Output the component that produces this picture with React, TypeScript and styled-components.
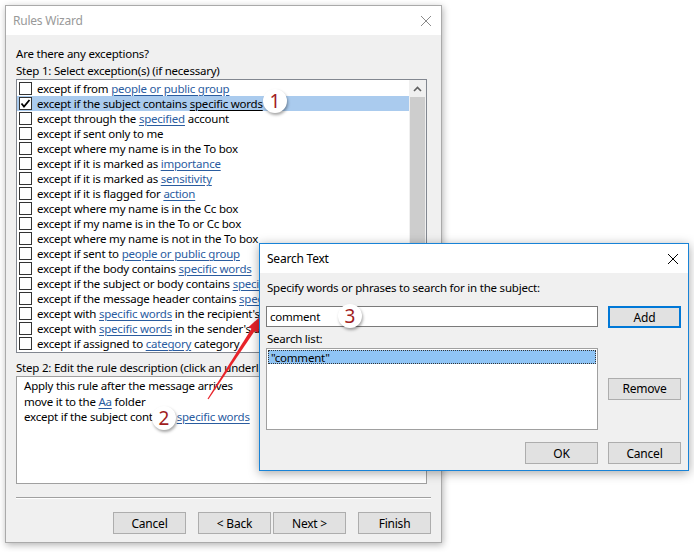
import styled, { createGlobalStyle } from 'styled-components'

const FONT = `"Noto Sans", "DejaVu Sans", sans-serif`

const GlobalStyle = createGlobalStyle`
  html, body {
    margin: 0;
    padding: 0;
    background: #fff;
  }
  body {
    font-family: ${FONT};
    font-size: 11.5px;
    letter-spacing: -0.22px;
    color: #000;
  }
`

type Part = { text: string; link?: boolean }

const exceptions: { parts: Part[]; checked?: boolean }[] = [
  { parts: [{ text: 'except if from ' }, { text: 'people or public group', link: true }] },
  { parts: [{ text: 'except if the subject contains ' }, { text: 'specific words', link: true }], checked: true },
  { parts: [{ text: 'except through the ' }, { text: 'specified', link: true }, { text: ' account' }] },
  { parts: [{ text: 'except if sent only to me' }] },
  { parts: [{ text: 'except where my name is in the To box' }] },
  { parts: [{ text: 'except if it is marked as ' }, { text: 'importance', link: true }] },
  { parts: [{ text: 'except if it is marked as ' }, { text: 'sensitivity', link: true }] },
  { parts: [{ text: 'except if it is flagged for ' }, { text: 'action', link: true }] },
  { parts: [{ text: 'except where my name is in the Cc box' }] },
  { parts: [{ text: 'except if my name is in the To or Cc box' }] },
  { parts: [{ text: 'except where my name is not in the To box' }] },
  { parts: [{ text: 'except if sent to ' }, { text: 'people or public group', link: true }] },
  { parts: [{ text: 'except if the body contains ' }, { text: 'specific words', link: true }] },
  { parts: [{ text: 'except if the subject or body contains ' }, { text: 'specific words', link: true }] },
  { parts: [{ text: 'except if the message header contains ' }, { text: 'specific words', link: true }] },
  { parts: [{ text: 'except with ' }, { text: 'specific words', link: true }, { text: " in the recipient's address" }] },
  { parts: [{ text: 'except with ' }, { text: 'specific words', link: true }, { text: " in the sender's address" }] },
  { parts: [{ text: 'except if assigned to ' }, { text: 'category', link: true }, { text: ' category' }] },
]

const description: Part[][] = [
  [{ text: 'Apply this rule after the message arrives' }],
  [{ text: 'move it to the ' }, { text: 'Aa', link: true }, { text: ' folder' }],
  [{ text: 'except if the subject contains ' }, { text: 'specific words', link: true }],
]

function CloseIcon({ color }: { color: string }) {
  return (
    <svg width="12" height="12" viewBox="0 0 12 12">
      <path d="M1 1 L11 11 M11 1 L1 11" stroke={color} strokeWidth="1" fill="none" />
    </svg>
  )
}

export default function App() {
  return (
    <Desktop>
      <GlobalStyle />

      <Window $left={5} $top={5} $width={437} $height={538} $z={1}>
        <TitleBar>
          <Title $active={false}>Rules Wizard</Title>
          <CloseIcon color="#8a8a8a" />
        </TitleBar>
        <WizardBody>
          <Label>Are there any exceptions?</Label>
          <Label>Step 1: Select exception(s) (if necessary)</Label>
          <ListBox>
            <Rows>
              {exceptions.map((row, i) => (
                <Row key={i} $selected={!!row.checked}>
                  <Check>
                    {row.checked && (
                      <svg width="11" height="11" viewBox="0 0 11 11">
                        <path d="M1.5 5.5 L4 8.5 L9.5 2" stroke="#000" strokeWidth="1.8" fill="none" />
                      </svg>
                    )}
                  </Check>
                  <span>
                    {row.parts.map((p, j) =>
                      p.link ? (
                        <Link key={j} $plain={!!row.checked}>{p.text}</Link>
                      ) : (
                        <span key={j}>{p.text}</span>
                      ),
                    )}
                  </span>
                </Row>
              ))}
            </Rows>
            <Scrollbar>
              <ScrollUp>
                <svg width="9" height="6" viewBox="0 0 9 6">
                  <path d="M1 5 L4.5 1.5 L8 5" stroke="#606060" strokeWidth="1.6" fill="none" />
                </svg>
              </ScrollUp>
              <Thumb />
            </Scrollbar>
          </ListBox>
          <Label $gap={6}>Step 2: Edit the rule description (click an underlined value)</Label>
          <DescBox>
            {description.map((line, i) => (
              <DescLine key={i}>
                {line.map((p, j) =>
                  p.link ? <Link key={j}>{p.text}</Link> : <span key={j}>{p.text}</span>,
                )}
              </DescLine>
            ))}
          </DescBox>
          <Separator />
          <ButtonRow>
            <Button>Cancel</Button>
            <ButtonPair>
              <Button>&lt; Back</Button>
              <Button>Next &gt;</Button>
            </ButtonPair>
            <Button>Finish</Button>
          </ButtonRow>
        </WizardBody>
      </Window>

      <Arrow width="694" height="552" viewBox="0 0 694 552">
        <polygon points="207.5,398.7 208.5,399.3 255,330.5 251.8,328.3" fill="#e8232a" />
        <polygon points="262,315 258,333 248.6,327" fill="#e8232a" />
      </Arrow>

      <Window $left={259} $top={243} $width={430} $height={228} $z={3} $active>
        <TitleBar>
          <Title $active>Search Text</Title>
          <CloseIcon color="#000" />
        </TitleBar>
        <DialogBody>
          <Prompt>Specify words or phrases to search for in the subject:</Prompt>
          <TextInput defaultValue="comment" readOnly />
          <Button $default $top={10}>Add</Button>
          <ListLabel>Search list:</ListLabel>
          <SearchList>
            <SearchItem>"comment"</SearchItem>
          </SearchList>
          <Button $middle>Remove</Button>
          <Button $top={12} $end>OK</Button>
          <Button $top={12}>Cancel</Button>
        </DialogBody>
      </Window>

      <Badge $x={275} $y={101}>1</Badge>
      <Badge $x={164} $y={418}>2</Badge>
      <Badge $x={350} $y={316}>3</Badge>
    </Desktop>
  )
}

const Desktop = styled.div`
  position: relative;
  width: 694px;
  height: 552px;
  overflow: hidden;
  background: #fff;
`

const Window = styled.div<{ $left: number; $top: number; $width: number; $height: number; $z: number; $active?: boolean }>`
  position: absolute;
  left: ${p => p.$left}px;
  top: ${p => p.$top}px;
  width: ${p => p.$width}px;
  height: ${p => p.$height}px;
  z-index: ${p => p.$z};
  box-sizing: border-box;
  display: flex;
  flex-direction: column;
  background: #f0f0f0;
  border: 1px solid ${p => (p.$active ? '#1883d7' : '#aaaaaa')};
  box-shadow: ${p => (p.$active ? '0 2px 10px rgba(0,0,0,0.35)' : '1px 2px 7px rgba(0,0,0,0.3)')};
`

const TitleBar = styled.div`
  height: 29px;
  flex: none;
  display: flex;
  align-items: center;
  justify-content: space-between;
  padding: 0 9px 0 7px;
  background: #fff;
`

const Title = styled.span<{ $active: boolean }>`
  font-size: 12px;
  color: ${p => (p.$active ? '#000' : '#999')};
`

const WizardBody = styled.div`
  flex: 1;
  display: flex;
  flex-direction: column;
  padding: 10px;
`

const Label = styled.div<{ $gap?: number }>`
  line-height: 17px;
  height: 17px;
  margin-top: ${p => p.$gap ?? 0}px;
  white-space: nowrap;
`

const ListBox = styled.div`
  height: 274px;
  margin-right: 4px;
  box-sizing: border-box;
  display: flex;
  background: #fff;
  border: 1px solid #828790;
  overflow: hidden;
`

const Rows = styled.div`
  flex: 1;
  padding-top: 1px;
  overflow: hidden;
`

const Row = styled.div<{ $selected: boolean }>`
  height: 15px;
  line-height: 15px;
  display: flex;
  align-items: center;
  gap: 5px;
  padding-left: 2px;
  white-space: nowrap;
  background: ${p => (p.$selected ? '#aacbee' : 'transparent')};
`

const Check = styled.div`
  width: 13px;
  height: 13px;
  flex: none;
  box-sizing: border-box;
  border: 1px solid #333;
  background: #fff;
  display: flex;
  align-items: center;
  justify-content: center;
`

const Link = styled.span<{ $plain?: boolean }>`
  color: ${p => (p.$plain ? '#000' : '#2a5c9f')};
  text-decoration: underline;
  text-underline-offset: 2px;
`

const Scrollbar = styled.div`
  width: 17px;
  flex: none;
  display: flex;
  flex-direction: column;
  background: #f0f0f0;
`

const ScrollUp = styled.div`
  height: 17px;
  display: flex;
  align-items: center;
  justify-content: center;
`

const Thumb = styled.div`
  height: 230px;
  margin: 0 1px;
  background: #cdcdcd;
`

const DescBox = styled.div`
  height: 108px;
  margin-right: 4px;
  box-sizing: border-box;
  padding: 1px 7px;
  background: #fff;
  border: 1px solid #a0a0a0;
`

const DescLine = styled.div`
  line-height: 15.5px;
  white-space: nowrap;
`

const Separator = styled.div`
  margin-top: 13px;
  border-top: 1px solid #a0a0a0;
  border-bottom: 1px solid #fff;
`

const ButtonRow = styled.div`
  margin-top: 13px;
  display: flex;
  justify-content: flex-end;
  gap: 12px;
`

const ButtonPair = styled.div`
  display: flex;
  gap: 2px;
`

const Button = styled.div<{ $default?: boolean; $top?: number; $end?: boolean; $middle?: boolean }>`
  width: 73px;
  height: 22px;
  box-sizing: border-box;
  display: flex;
  align-items: center;
  justify-content: center;
  font-size: 12px;
  background: #e1e1e1;
  border: ${p => (p.$default ? '2px solid #0078d7' : '1px solid #adadad')};
  margin-top: ${p => p.$top ?? 0}px;
  justify-self: ${p => (p.$end ? 'end' : 'start')};
  align-self: ${p => (p.$middle ? 'center' : 'start')};
`

const DialogBody = styled.div`
  flex: 1;
  display: grid;
  grid-template-columns: 332px 73px;
  grid-template-rows: auto auto auto auto auto;
  column-gap: 10px;
  align-content: start;
  padding: 7px 7px 7px 6px;
`

const Prompt = styled.div`
  grid-column: 1 / -1;
  line-height: 16px;
  padding-left: 1px;
  white-space: nowrap;
`

const TextInput = styled.input`
  margin: 10px 0 0;
  height: 21px;
  box-sizing: border-box;
  padding: 0 3px;
  border: 1px solid #7a7a7a;
  background: #fff;
  font-family: ${FONT};
  font-size: 11.5px;
  letter-spacing: -0.22px;
  color: #000;
  outline: none;
`

const ListLabel = styled.div`
  grid-column: 1 / -1;
  margin-top: 3px;
  line-height: 16px;
  padding-left: 1px;
`

const SearchList = styled.div`
  margin-top: 1px;
  height: 82px;
  box-sizing: border-box;
  padding: 1px;
  background: #fff;
  border: 1px solid #a0a0a0;
`

const SearchItem = styled.div`
  height: 14px;
  line-height: 13px;
  padding-left: 2px;
  box-sizing: border-box;
  background: #8fc4f5;
  border: 1px dotted #333;
`

const Arrow = styled.svg`
  position: absolute;
  left: 0;
  top: 0;
  z-index: 2;
  pointer-events: none;
`

const Badge = styled.div<{ $x: number; $y: number }>`
  position: absolute;
  left: ${p => p.$x - 12}px;
  top: ${p => p.$y - 12}px;
  z-index: 4;
  width: 24px;
  height: 24px;
  border-radius: 50%;
  background: #fff;
  box-shadow: 1px 2px 3px rgba(0, 0, 0, 0.35);
  display: flex;
  align-items: center;
  justify-content: center;
  font-family: ${FONT};
  font-size: 19px;
  letter-spacing: 0;
  color: #a11d1d;
`
